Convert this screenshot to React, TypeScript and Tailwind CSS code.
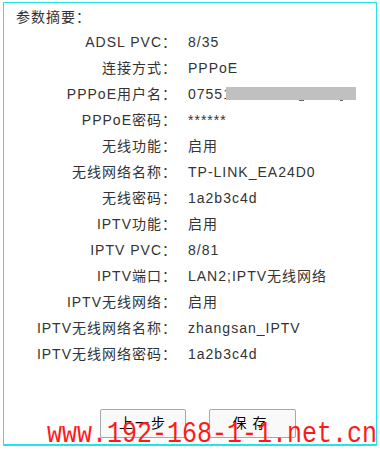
const rows: [string, string][] = [
  ['ADSL PVC：', '8/35'],
  ['连接方式：', 'PPPoE'],
  ['PPPoE用户名：', '0755'],
  ['PPPoE密码：', '******'],
  ['无线功能：', '启用'],
  ['无线网络名称：', 'TP-LINK_EA24D0'],
  ['无线密码：', '1a2b3c4d'],
  ['IPTV功能：', '启用'],
  ['IPTV PVC：', '8/81'],
  ['IPTV端口：', 'LAN2;IPTV无线网络'],
  ['IPTV无线网络：', '启用'],
  ['IPTV无线网络名称：', 'zhangsan_IPTV'],
  ['IPTV无线网络密码：', '1a2b3c4d'],
];

const App = () => {
  return (
    <div
      className="relative w-[380px] h-[451px] bg-white overflow-hidden text-[14px] text-[#333] tracking-[1px]"
      style={{ fontFamily: '"Liberation Sans", "Noto Sans CJK SC", sans-serif' }}
    >
      <div className="ml-[3px] mt-[2px] w-[374px] h-[444px] border border-b-2 border-[#22e6e6]">
        {/* title */}
        <div className="h-[26px] leading-[28px] pl-[12px]">参数摘要：</div>

        {/* summary rows */}
        <div className="flex flex-col">
          {rows.map(([label, value], idx) => (
            <div key={idx} className="flex h-[26px] leading-[26px]">
              <div className="w-[173px] text-right whitespace-nowrap">{label}</div>
              <div className="ml-[11px] whitespace-nowrap relative">
                {value}
                {idx === 2 && (
                  <>
                    <span className="inline-block w-[2px]">1</span>
                    <span className="absolute left-[38px] top-[6px] w-[130px] h-[13px] bg-[#c0c0c0]" />
                    <span className="absolute left-[111px] top-[19px] w-[5px] h-[1px] bg-[#666]" />
                    <span className="absolute left-[152px] top-[19px] w-[3px] h-[1px] bg-[#666]" />
                  </>
                )}
              </div>
            </div>
          ))}
        </div>

        {/* buttons */}
        <div className="flex gap-[23px] mt-[42px] pl-[96px] tracking-[2px]">
          <button className="w-[86px] h-[29px] rounded-[2px] border border-[#a8a8a8] bg-[#f9f9f9] text-black text-[14px]">
            上一步
          </button>
          <button className="w-[87px] h-[29px] rounded-[2px] border border-[#a8a8a8] bg-[#f9f9f9] text-black text-[14px] tracking-[6px]">
            保存
          </button>
        </div>
      </div>

      {/* watermark */}
      <div
        className="absolute left-[47px] top-[419px] text-[30px] leading-none text-[#ff1a1a] tracking-normal whitespace-nowrap origin-left scale-x-[0.833]"
        style={{ fontFamily: '"Liberation Mono", monospace' }}
      >
        www.192-168-1-1.net.cn
      </div>
    </div>
  );
};

export default App;
